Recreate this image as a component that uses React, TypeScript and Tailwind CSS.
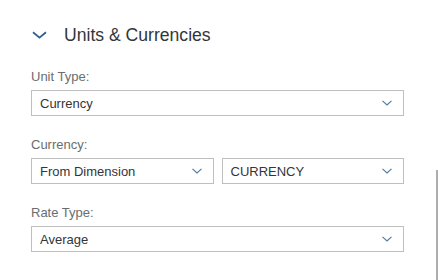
import React from 'react';

function Chevron({ className = '' }: { className?: string }) {
  return (
    <svg width="10" height="6" viewBox="0 0 10 6" className={className} fill="none">
      <path d="M0.5 0.8 L5 5 L9.5 0.8" stroke="#4f78a3" strokeWidth="1.1" />
    </svg>
  );
}

function Select({ value, className = '' }: { value: string; className?: string }) {
  return (
    <div
      className={`h-[26px] border border-[#bfbfbf] bg-white flex items-center justify-between pl-[8px] pr-[11px] ${className}`}
    >
      <span className="text-[13px] text-[#32363a] leading-none">{value}</span>
      <Chevron />
    </div>
  );
}

function Field({ label, children }: { label: string; children: React.ReactNode }) {
  return (
    <div className="flex flex-col">
      <label className="text-[13px] leading-[16px] text-[#6a6d70] mb-[5px]">{label}</label>
      {children}
    </div>
  );
}

export default function App() {
  const font = { fontFamily: '"Liberation Sans", Arial, sans-serif' };

  return (
    <main className="relative w-[438px] h-[280px] bg-white overflow-hidden" style={font}>
      <div className="pt-[22px] pl-[31px]">
        <div className="flex items-center h-[24px]">
          <svg width="15" height="8" viewBox="0 0 15 8" className="ml-[1px] mt-[1px]" fill="none">
            <path d="M1 1.2 L7.5 6.6 L14 1.2" stroke="#2f5f8a" strokeWidth="1.8" />
          </svg>
          <h2 className="ml-[17px] text-[17.6px] text-[#32363a] leading-[24px] mt-[1px]">Units &amp; Currencies</h2>
        </div>

        <div className="w-[373px] mt-[23px] flex flex-col gap-[21px]">
          <Field label="Unit Type:">
            <Select value="Currency" />
          </Field>
          <Field label="Currency:">
            <div className="grid grid-cols-2 gap-[8px]">
              <Select value="From Dimension" />
              <Select value="CURRENCY" />
            </div>
          </Field>
          <Field label="Rate Type:">
            <Select value="Average" />
          </Field>
        </div>
      </div>

      <div className="absolute left-[436px] top-[170px] w-[2px] h-[110px] bg-[#adadad]" />
    </main>
  );
}
